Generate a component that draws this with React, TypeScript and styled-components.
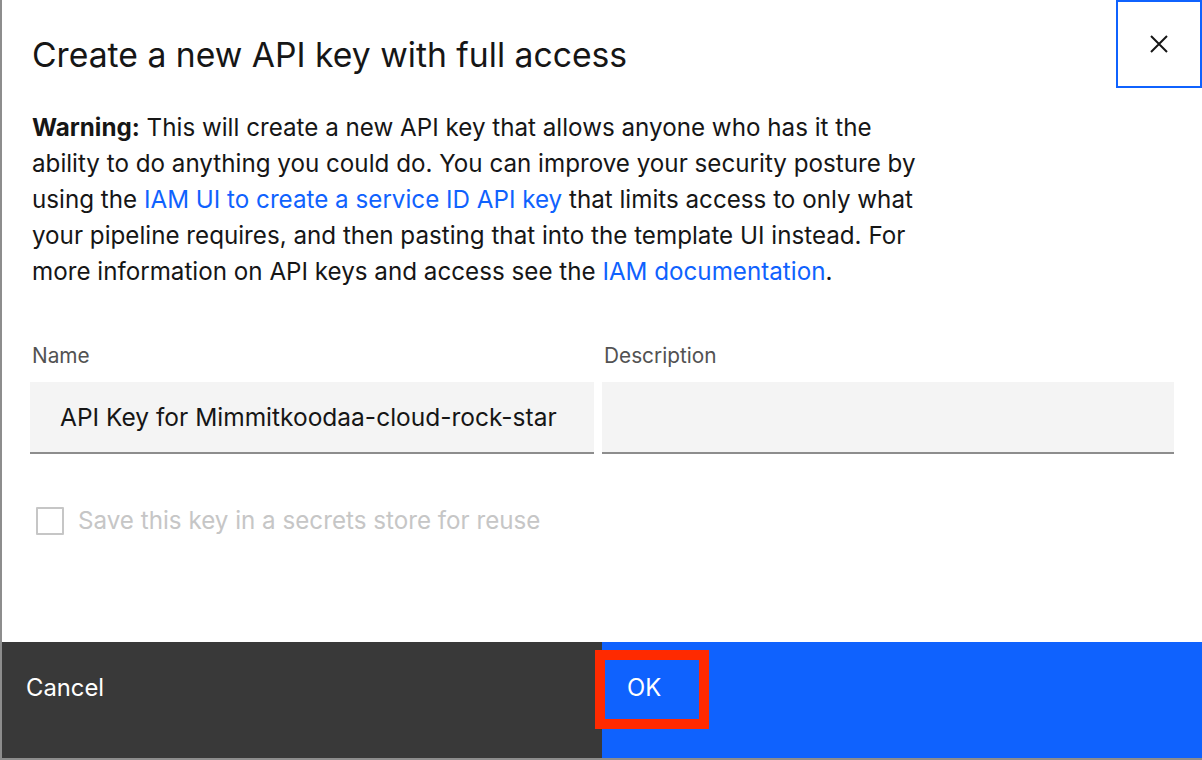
import React from "react";
import styled, { createGlobalStyle } from "styled-components";

const Global = createGlobalStyle`
  html, body { margin: 0; padding: 0; }
  body {
    background: #8d8d8d;
    font-family: Inter, "Noto Sans", "Liberation Sans", sans-serif;
    color: #161616;
  }
  #root { height: 760px; overflow: hidden; }
`;

const Modal = styled.div`
  margin-left: 2px;
  width: 1200px;
  height: 758px;
  background: #ffffff;
  display: flex;
  flex-direction: column;
  position: relative;
`;

const Header = styled.header`
  display: flex;
  justify-content: space-between;
  align-items: flex-start;
  height: 96px;
`;

const Title = styled.h2`
  margin: 0;
  padding: 37px 0 0 30px;
  font-size: 33.7px;
  font-weight: 400;
  line-height: 36px;
  letter-spacing: 0;
`;

const CloseButton = styled.button`
  width: 86px;
  height: 88px;
  border: 2px solid #0f62fe;
  background: #fff;
  display: flex;
  align-items: center;
  justify-content: center;
  padding: 0;
  cursor: pointer;
`;

const Content = styled.div`
  padding: 0 30px;
  flex: 1;
  display: flex;
  flex-direction: column;
`;

const Body = styled.p`
  margin: 14px 0 0;
  font-size: 24.2px;
  line-height: 36px;
  white-space: nowrap;
`;

const Link = styled.a`
  color: #0f62fe;
  text-decoration: none;
`;

const Fields = styled.div`
  display: grid;
  grid-template-columns: 564px 572px;
  column-gap: 8px;
  margin: 51px 0 0 -2px;
`;

const Field = styled.div`
  display: flex;
  flex-direction: column;
`;

const Label = styled.label`
  font-size: 20.8px;
  line-height: 26px;
  color: #525252;
  padding-left: 2px;
  height: 26px;
  margin: 2px 0 13px;
`;

const Input = styled.div`
  height: 70px;
  background: #f4f4f4;
  border-bottom: 2px solid #8d8d8d;
  display: flex;
  align-items: center;
  padding-left: 30px;
  font-size: 24.5px;
  color: #161616;
`;

const CheckRow = styled.div`
  display: flex;
  align-items: center;
  gap: 14px;
  margin: 52px 0 0 4px;
`;

const Box = styled.span`
  width: 24px;
  height: 24px;
  border: 2px solid #c6c6c6;
  border-radius: 1px;
`;

const CheckText = styled.span`
  font-size: 24.2px;
  color: #c6c6c6;
`;

const Footer = styled.footer`
  display: grid;
  grid-template-columns: 600px 600px;
  height: 116px;
`;

const FooterButton = styled.button<{ $primary?: boolean }>`
  position: relative;
  border: none;
  margin: 0;
  background: ${(p) => (p.$primary ? "#0f62fe" : "#393939")};
  color: #ffffff;
  font-family: inherit;
  font-size: 23.8px;
  text-align: left;
  padding: 0 0 26px ${(p) => (p.$primary ? "25px" : "24px")};
  cursor: pointer;
`;

const Annotation = styled.span`
  position: absolute;
  left: -7px;
  top: 8px;
  width: 114px;
  height: 79px;
  box-sizing: border-box;
  border: 10px solid #ff2a00;
  pointer-events: none;
`;

export default function App() {
  return (
    <>
      <Global />
      <Modal>
        <Header>
          <Title>Create a new API key with full access</Title>
          <CloseButton aria-label="Close">
            <svg width="22" height="22" viewBox="0 0 22 22">
              <path d="M3 3 L19 19 M19 3 L3 19" stroke="#161616" strokeWidth="2" fill="none" />
            </svg>
          </CloseButton>
        </Header>
        <Content>
          <Body>
            <strong>Warning:</strong> This will create a new API key that allows anyone who has it the
            <br />
            ability to do anything you could do. You can improve your security posture by
            <br />
            using the <Link href="#">IAM UI to create a service ID API key</Link> that limits access to only what
            <br />
            your pipeline requires, and then pasting that into the template UI instead. For
            <br />
            more information on API keys and access see the <Link href="#">IAM documentation</Link>.
          </Body>
          <Fields>
            <Field>
              <Label>Name</Label>
              <Input>API Key for Mimmitkoodaa-cloud-rock-star</Input>
            </Field>
            <Field>
              <Label>Description</Label>
              <Input />
            </Field>
          </Fields>
          <CheckRow>
            <Box />
            <CheckText>Save this key in a secrets store for reuse</CheckText>
          </CheckRow>
        </Content>
        <Footer>
          <FooterButton>Cancel</FooterButton>
          <FooterButton $primary>
            OK
            <Annotation />
          </FooterButton>
        </Footer>
      </Modal>
    </>
  );
}
